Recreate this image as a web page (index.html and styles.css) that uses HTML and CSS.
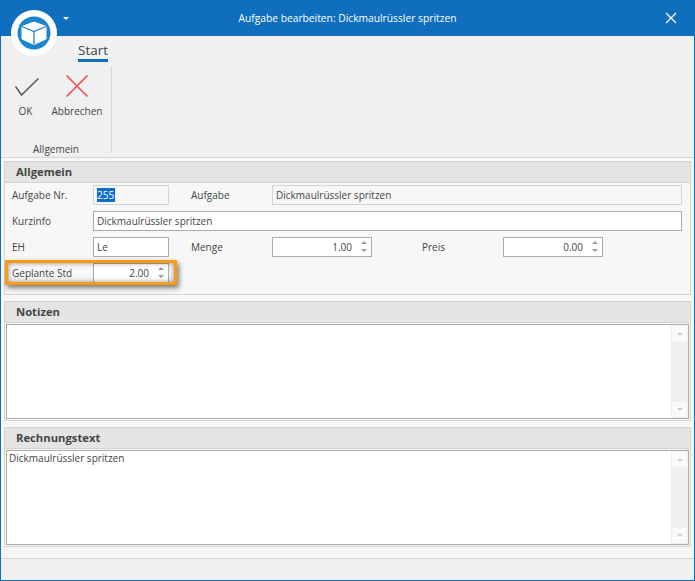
FILE: index.html
```html
<!DOCTYPE html>
<html lang="de">
<head>
    <meta charset="UTF-8">
    <title>Aufgabe bearbeiten</title>
    <link rel="stylesheet" href="styles.css">
</head>
<body>
    <div class="window">
        <div class="titlebar">
            <span class="title">Aufgabe bearbeiten: Dickmaulrüssler spritzen</span>
            <svg class="close" width="12" height="12" viewBox="0 0 12 12"><path d="M1 1 L11 11 M11 1 L1 11" stroke="#fff" stroke-width="1.2" fill="none"/></svg>
        </div>
        <div class="logo">
            <svg width="46" height="46" viewBox="0 0 46 46">
                <circle cx="23" cy="23" r="23" fill="#fff"/>
                <circle cx="23" cy="23" r="16.5" fill="#1a84cf"/>
                <path d="M23 12 L35 16.5 L35 29 L23 34.5 L11 29 L11 16.5 Z" fill="#fff" stroke="#fff" stroke-linejoin="round"/>
                <path d="M11 16.5 L23 21.5 L35 16.5 M23 21.5 L23 34.5" stroke="#1a84cf" stroke-width="1.3" fill="none"/>
            </svg>
        </div>
        <div class="caret"></div>
        <div class="ribbon">
            <div class="tabs"><span class="tab">Start</span></div>
            <div class="group">
                <div class="buttons">
                    <div class="btn btn-ok">
                        <svg width="24" height="18" viewBox="0 0 24 18"><path d="M.5 8.5 L6.5 17 L23.5 .5" stroke="#555" stroke-width="1.5" fill="none"/></svg>
                        <span>OK</span>
                    </div>
                    <div class="btn btn-cancel">
                        <svg width="22" height="22" viewBox="0 0 22 22"><path d="M.5 .5 L21.5 21.5 M21.5 .5 L.5 21.5" stroke="#f0474c" stroke-width="1.5" fill="none"/></svg>
                        <span>Abbrechen</span>
                    </div>
                </div>
                <div class="group-name">Allgemein</div>
            </div>
        </div>
        <div class="content">
            <section class="panel panel-main">
                <h2>Allgemein</h2>
                <div class="form">
                    <div class="row">
                        <label class="lbl">Aufgabe Nr.</label>
                        <div class="field field-s readonly"><span class="sel">255</span></div>
                        <label class="lbl lbl-2">Aufgabe</label>
                        <div class="field grow readonly">Dickmaulrüssler spritzen</div>
                    </div>
                    <div class="row">
                        <label class="lbl">Kurzinfo</label>
                        <div class="field grow">Dickmaulrüssler spritzen</div>
                    </div>
                    <div class="row">
                        <label class="lbl">EH</label>
                        <div class="field field-s">Le</div>
                        <label class="lbl lbl-2">Menge</label>
                        <div class="field spin field-m">1.00<span class="arrows"><i class="up"></i><i class="down"></i></span></div>
                        <label class="lbl lbl-3">Preis</label>
                        <div class="field spin field-m">0.00<span class="arrows"><i class="up"></i><i class="down"></i></span></div>
                    </div>
                    <div class="row">
                        <label class="lbl">Geplante Std</label>
                        <div class="field spin field-s">2.00<span class="arrows"><i class="up"></i><i class="down"></i></span></div>
                    </div>
                    <div class="highlight"></div>
                </div>
            </section>
            <section class="panel panel-notes">
                <h2>Notizen</h2>
                <div class="memo">
                    <div class="memo-text"></div>
                    <div class="scroll"><b><i class="up"></i></b><b><i class="down"></i></b></div>
                </div>
            </section>
            <section class="panel panel-bill">
                <h2>Rechnungstext</h2>
                <div class="memo">
                    <div class="memo-text">Dickmaulrüssler spritzen</div>
                    <div class="scroll"><b><i class="up"></i></b><b><i class="down"></i></b></div>
                </div>
            </section>
        </div>
        <div class="statusbar"></div>
    </div>
</body>
</html>
```

FILE: styles.css
```css
*{
    margin: 0;
    padding: 0;
    box-sizing: border-box;
}
body{
    font-family: "Open Sans", "Noto Sans", sans-serif;
    font-size: 10px;
    color: #444;
}
.window{
    position: relative;
    display: flex;
    flex-direction: column;
    width: 695px;
    height: 581px;
    border: 1px solid #106ebe;
    border-top: 0;
    background-color: #f7f7f7;
}
.titlebar{
    display: flex;
    align-items: center;
    justify-content: center;
    position: relative;
    flex: none;
    height: 36px;
    margin: 0 -1px;
    background-color: #106ebe;
    color: #fff;
    font-size: 10.25px;
}
.close{
    position: absolute;
    top: 12px;
    right: 18px;
}
.logo{
    position: absolute;
    top: 10px;
    left: 10px;
    width: 46px;
    height: 46px;
}
.caret{
    position: absolute;
    top: 17px;
    left: 62px;
    border-top: 3px solid #fff;
    border-left: 3px solid transparent;
    border-right: 3px solid transparent;
}
.ribbon{
    flex: none;
    height: 122px;
    border-bottom: 1px solid #d4d4d4;
    background-color: #f0f0f0;
}
.tabs{
    height: 30px;
    padding: 6px 0 0 77px;
}
.tab{
    display: inline-block;
    height: 20px;
    border-bottom: 3px solid #106ebe;
    font-size: 13.5px;
    line-height: 16px;
}
.group{
    display: flex;
    flex-direction: column;
    width: 111px;
    height: 87px;
    border-right: 1px solid #d4d4d4;
}
.buttons{
    display: flex;
    flex: none;
    height: 76px;
}
.btn{
    display: flex;
    flex-direction: column;
    align-items: center;
}
.btn span{
    line-height: 14px;
}
.btn-ok{
    width: 49px;
    padding-top: 12px;
}
.btn-ok svg{
    margin: 0 0 8px 3px;
}
.btn-cancel{
    width: 54px;
    padding-top: 9px;
}
.btn-cancel svg{
    margin-bottom: 7px;
}
.group-name{
    flex: none;
    line-height: 14px;
    text-align: center;
}
.content{
    display: flex;
    flex-direction: column;
    flex: 1;
    gap: 6px;
    padding: 3px 3px 0 3px;
    border-bottom: 1px solid #d4d4d4;
}
.panel{
    display: flex;
    flex-direction: column;
    border: 1px solid #d4d4d4;
}
.panel h2{
    flex: none;
    height: 21px;
    padding-left: 11px;
    border-bottom: 1px solid #d4d4d4;
    background-color: #e4e4e4;
    font-size: 11.25px;
    line-height: 20px;
}
.panel-main{
    height: 134px;
}
.panel-notes{
    height: 120px;
}
.panel-bill{
    height: 120px;
}
.form{
    position: relative;
    display: flex;
    flex-direction: column;
    gap: 6px;
    padding: 2px 8px 0 7px;
}
.row{
    display: flex;
    align-items: center;
    height: 20px;
}
.lbl{
    flex: none;
    width: 81px;
}
.lbl-2{
    margin-left: 22px;
}
.lbl-3{
    margin-left: 50px;
}
.field{
    height: 20px;
    padding: 0 3px;
    border: 1px solid #ababab;
    background-color: #fff;
    line-height: 18px;
}
.readonly{
    border-color: #d4d4d4;
    background-color: #f7f7f7;
}
.grow{
    flex: 1;
}
.field-s{
    width: 76px;
}
.field-m{
    width: 100px;
}
.sel{
    display: inline-block;
    padding-right: 1px;
    background-color: #0f6cd0;
    color: #fff;
    line-height: 14px;
}
.spin{
    position: relative;
    padding-right: 19px;
    text-align: right;
}
.arrows{
    position: absolute;
    top: 3px;
    right: 2px;
    display: flex;
    flex-direction: column;
    gap: 5px;
    width: 10px;
    align-items: center;
}
.up,
.down{
    display: block;
    width: 0;
    height: 0;
    border-left: 3.5px solid transparent;
    border-right: 3.5px solid transparent;
}
.up{
    border-bottom: 3px solid #9a9a9a;
}
.down{
    border-top: 3px solid #9a9a9a;
}
.highlight{
    position: absolute;
    top: 77px;
    left: 0;
    width: 172px;
    height: 25px;
    border: 3px solid #ff9a14;
    box-shadow: 2px 3px 5px rgba(0, 0, 0, .5), inset 0 0 5px rgba(0, 0, 0, .45);
}
.memo{
    display: flex;
    flex: 1;
    margin: 1px;
    border: 1px solid #ababab;
    background-color: #fff;
}
.memo-text{
    flex: 1;
    padding: 0 2px;
    line-height: 14px;
}
.scroll{
    display: flex;
    flex-direction: column;
    justify-content: space-between;
    width: 17px;
    padding: 1px;
    background-color: #f0f0f0;
}
.scroll b{
    display: flex;
    align-items: center;
    justify-content: center;
    height: 15px;
    background-color: #fafafa;
}
.scroll .up{
    border-bottom-color: #ccc;
}
.scroll .down{
    border-top-color: #ccc;
}
.statusbar{
    flex: none;
    height: 21px;
    background-color: #f0f0f0;
}
```
